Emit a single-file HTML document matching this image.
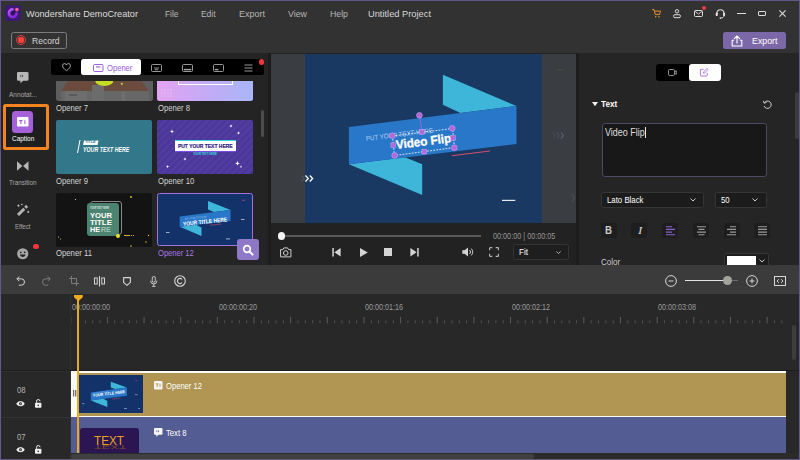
<!DOCTYPE html>
<html><head><meta charset="utf-8"><title>Wondershare DemoCreator</title>
<style>
*{box-sizing:border-box;margin:0;padding:0}
html,body{width:800px;height:460px;overflow:hidden;background:#323232;font-family:"Liberation Sans",sans-serif;color:#d0d0d0;font-size:9px}
.a{position:absolute}
#win{position:absolute;left:0;top:0;width:800px;height:460px;background:#323232;overflow:hidden}
.t{position:absolute;white-space:nowrap;line-height:1.15}
svg{overflow:visible}
</style></head><body>
<div id="win">
<svg class="a" style="left:5.2px;top:5.1px;" width="16" height="16" viewBox="0 0 16 16" fill="none"><rect x="0" y="0" width="16" height="16" rx="3.300" fill="#3b1b70"/>
<defs><linearGradient id="lg" x1="0" y1="0" x2="0.600" y2="1"><stop offset="0" stop-color="#c060ff"/><stop offset="0.500" stop-color="#a838f4"/><stop offset="1" stop-color="#8428d8"/></linearGradient><clipPath id="lc"><rect x="0" y="0" width="16" height="16" rx="3.300"/></clipPath></defs>
<circle cx="7.800" cy="8.200" r="3" fill="#2c1460"/><path d="M7.400 4.400A3.800 3.800 0 1 0 11.500 8.700" stroke="url(#lg)" stroke-width="2.700" stroke-linecap="round"/>
<circle cx="11.900" cy="4.600" r="1.800" fill="#ff60a4"/></svg>
<div class="t" style="left:26.00px;top:8.48px;font-size:9.6px;color:#dcdcdc;transform:scaleX(0.9512);transform-origin:0 50%;">Wondershare DemoCreator</div>
<div class="t" style="left:165.00px;top:8.48px;font-size:9.6px;color:#b6b6b6;transform:scaleX(0.8727);transform-origin:0 50%;">File</div>
<div class="t" style="left:201.00px;top:8.48px;font-size:9.6px;color:#b6b6b6;transform:scaleX(0.8765);transform-origin:0 50%;">Edit</div>
<div class="t" style="left:238.50px;top:8.48px;font-size:9.6px;color:#b6b6b6;transform:scaleX(0.9371);transform-origin:0 50%;">Export</div>
<div class="t" style="left:287.50px;top:8.48px;font-size:9.6px;color:#b6b6b6;transform:scaleX(0.9208);transform-origin:0 50%;">View</div>
<div class="t" style="left:329.50px;top:8.48px;font-size:9.6px;color:#b6b6b6;transform:scaleX(0.9117);transform-origin:0 50%;">Help</div>
<div class="t" style="left:368.00px;top:8.48px;font-size:9.6px;color:#d6d6d6;transform:scaleX(0.9678);transform-origin:0 50%;">Untitled Project</div>
<svg class="a" style="left:651.8px;top:8.8px;" width="9" height="9" viewBox="0 0 9 9" fill="none"><path d="M0.500 0.600h1.500l1.200 4.800h4.300l1-3.300H2.500" stroke="#e8902a" stroke-width="1" stroke-linejoin="round" stroke-linecap="round"/><circle cx="3.700" cy="7.700" r="0.800" fill="#e8902a"/><circle cx="7" cy="7.700" r="0.800" fill="#e8902a"/></svg>
<svg class="a" style="left:673.3px;top:8.8px;" width="8" height="10" viewBox="0 0 8 10" fill="none"><circle cx="4" cy="2.300" r="1.700" stroke="#dcdcdc" stroke-width="1"/><rect x="0.600" y="5.700" width="6.800" height="3" rx="1.300" stroke="#dcdcdc" stroke-width="1"/></svg>
<svg class="a" style="left:694.3px;top:10.3px;" width="9" height="7" viewBox="0 0 9 7" fill="none"><rect x="0.500" y="0.500" width="8" height="6" rx="1" stroke="#dcdcdc" stroke-width="1"/><path d="M0.900 1.200l3.600 2.800 3.600-2.800" stroke="#dcdcdc" stroke-width="0.900"/></svg>
<div class="a" style="left:701.9px;top:5.9px;width:4.2px;height:4.2px;background:#f0383c;border-radius:50%"></div>
<svg class="a" style="left:714.7px;top:8px;" width="12" height="13" viewBox="0 0 12 13" fill="none"><g transform="scale(0.9)"><path d="M2.2 8V5.8a3.8 3.8 0 0 1 7.6 0V8" stroke="#e0e0e0" stroke-width="1.2"/><rect x="0.8" y="5" width="2.2" height="4" rx="1" fill="#e0e0e0"/><rect x="9" y="5" width="2.2" height="4" rx="1" fill="#e0e0e0"/><path d="M9.8 9c0 1.4-1.2 2-3 2" stroke="#e0e0e0" stroke-width="1"/><circle cx="6" cy="11.2" r="1" fill="#e0e0e0"/></g></svg>
<div class="a" style="left:737.2px;top:12.8px;width:8.5px;height:1.3px;background:#dcdcdc;"></div>
<div class="a" style="left:757.5px;top:10.8px;width:8.5px;height:5.4px;border:1.200px solid #dcdcdc;border-radius:1px"></div>
<svg class="a" style="left:779px;top:10px;" width="7" height="7" viewBox="0 0 7 7" fill="none"><path d="M0.400 0.400l6.200 6.200M6.600 0.400l-6.200 6.200" stroke="#dcdcdc" stroke-width="1.100"/></svg>
<div class="a" style="left:10.5px;top:32px;width:56.5px;height:16.5px;border:1px solid #7c7c7c;border-radius:2.5px"></div>
<svg class="a" style="left:15.5px;top:35px;" width="10" height="10" viewBox="0 0 10 10" fill="none"><circle cx="5" cy="5" r="4.5" stroke="#f0413c" stroke-width="0.9"/><circle cx="5" cy="5" r="3.2" fill="#f0413c"/></svg>
<div class="t" style="left:31.50px;top:34.78px;font-size:9.6px;color:#d6d6d6;transform:scaleX(0.8886);transform-origin:0 50%;">Record</div>
<div class="a" style="left:723px;top:32px;width:63px;height:16.5px;background:#7b68a8;border-radius:2.5px"></div>
<svg class="a" style="left:730.5px;top:34.5px;" width="12" height="12" viewBox="0 0 12 12" fill="none"><path d="M6 8V1.2M3.4 3.6L6 1l2.6 2.6" stroke="#fff" stroke-width="1.1" stroke-linecap="round" stroke-linejoin="round"/><path d="M3 5.2H1.2V11h9.6V5.2H9" stroke="#fff" stroke-width="1.1" stroke-linejoin="round"/></svg>
<div class="t" style="left:751.60px;top:35.48px;font-size:9.6px;color:#ffffff;transform:scaleX(0.9191);transform-origin:0 50%;">Export</div>
<div class="a" style="left:0px;top:53px;width:800px;height:212px;background:#1c1c1c;"></div>
<div class="a" style="left:0px;top:53px;width:48px;height:212px;background:#242424;"></div>
<div class="a" style="left:48px;top:53px;width:220px;height:212px;background:#242424;"></div>
<div class="a" style="left:271px;top:53px;width:305px;height:212px;background:#222222;"></div>
<div class="a" style="left:579px;top:53px;width:221px;height:212px;background:#252525;"></div>
<svg class="a" style="left:17px;top:72px;" width="11.5" height="11.5" viewBox="0 0 11.5 11.5" fill="none"><path d="M1.2 0h9.1a1.2 1.2 0 0 1 1.2 1.2v6.3a1.2 1.2 0 0 1-1.2 1.2H6.2L3.4 11.3V8.7H1.2A1.2 1.2 0 0 1 0 7.500V1.2A1.200 1.200 0 0 1 1.200 0z" fill="#b8b8b8"/><path d="M3.8 3.200v2M5.600 3.200v2" stroke="#555" stroke-width="0.9"/><path d="M3.300 3.300h1M5.100 3.300h1" stroke="#555" stroke-width="0.800"/></svg>
<div class="t" style="left:8.80px;top:90.52px;font-size:7.8px;color:#a8a8a8;transform:scaleX(0.8386);transform-origin:0 50%;">Annotat...</div>
<div class="a" style="left:2.6px;top:103.7px;width:46.5px;height:46px;background:#1e1e1e;border:3.300px solid #f5831f;border-radius:2.500px"></div>
<div class="a" style="left:12.1px;top:111.2px;width:21.2px;height:21.5px;background:#a461d9;border-radius:3.500px"></div>
<svg class="a" style="left:17px;top:117px;" width="11.5" height="9.5" viewBox="0 0 11.5 9.5" fill="none"><rect x="0" y="0" width="11.500" height="9.500" rx="0.800" fill="#fff"/><path d="M2.200 3.600h3.400M3.900 3.600v3.400" stroke="#a45fd8" stroke-width="1.1"/><path d="M7.900 3.300v3.800" stroke="#a45fd8" stroke-width="1.100"/></svg>
<div class="t" style="left:11.60px;top:134.71px;font-size:7.8px;color:#ffffff;transform:scaleX(0.8295);transform-origin:0 50%;">Caption</div>
<svg class="a" style="left:17px;top:161px;" width="11.5" height="10" viewBox="0 0 11.5 10" fill="none"><path d="M0 0.300L5.400 5 0 9.700z" fill="#b6b6b6"/><path d="M11.500 0.300L6.100 5l5.400 4.700z" fill="#b6b6b6"/></svg>
<div class="t" style="left:9.00px;top:179.12px;font-size:7.8px;color:#a8a8a8;transform:scaleX(0.8099);transform-origin:0 50%;">Transition</div>
<svg class="a" style="left:16px;top:203px;" width="14" height="14" viewBox="0 0 14 14" fill="none"><path d="M2 12L8.300 5.700" stroke="#b2b2b2" stroke-width="3" stroke-linecap="butt"/><path d="M9.300 4.700l1.800-1.800" stroke="#b2b2b2" stroke-width="3" stroke-linecap="butt"/><path d="M2.500 1.500v2.400M1.300 2.700h2.400M12.200 7.800v2.200M11.100 8.900h2.200M5.800 0.800v1.400M5.100 1.500h1.400" stroke="#b2b2b2" stroke-width="1"/></svg>
<div class="t" style="left:15.00px;top:222.81px;font-size:7.8px;color:#a8a8a8;transform:scaleX(0.7828);transform-origin:0 50%;">Effect</div>
<svg class="a" style="left:17px;top:247.5px;" width="11.5" height="11.5" viewBox="0 0 11.5 11.5" fill="none"><circle cx="5.750" cy="5.750" r="5.600" fill="#a8a8a8"/><circle cx="3.800" cy="4.300" r="0.900" fill="#242424"/><circle cx="7.700" cy="4.300" r="0.900" fill="#242424"/><path d="M2.800 6.600a3 3 0 0 0 5.900 0z" fill="#242424"/></svg>
<div class="a" style="left:33.2px;top:243.8px;width:5.6px;height:5.6px;background:#f0383c;border-radius:50%"></div>
<div class="a" style="left:56px;top:80.500px;width:96.500px;height:20.700px;overflow:hidden;background:#5e5e5e;border-radius:0 0 2.500px 2.500px"><svg class="a" style="left:0;top:0" width="96.500" height="20.700"><path d="M12 0h73.500l7 10H5z" fill="#6b4b3d"/><rect x="5" y="10" width="88" height="10.700" fill="#676767"/><rect x="9" y="10" width="22" height="10.700" fill="#6e6e6e"/><rect x="36" y="4" width="12" height="16.700" fill="#6c6c6c"/><rect x="13" y="13" width="8" height="2" fill="#5a5a5a"/><rect x="66" y="11" width="3" height="9.700" fill="#6f6f6f"/><ellipse cx="48.300" cy="0" rx="9" ry="5" fill="#c6de22"/><circle cx="65.800" cy="2.800" r="1.100" fill="#c6de22"/></svg></div>
<div class="a" style="left:157.200px;top:80.500px;width:96px;height:20.700px;overflow:hidden;background:linear-gradient(90deg,#e3a4f2,#c4aaf6 50%,#a8b6f8);border-radius:0 0 2.500px 2.500px"><div class="a" style="left:21px;top:-10px;width:55px;height:14px;border:1px solid #fff"></div><svg class="a" style="left:4px;top:8px" width="16" height="12"><g fill="#fff" opacity="0.7"><circle cx="1" cy="1" r="0.500"/><circle cx="4" cy="1" r="0.500"/><circle cx="7" cy="1" r="0.500"/><circle cx="10" cy="1" r="0.500"/><circle cx="1" cy="4" r="0.500"/><circle cx="4" cy="4" r="0.500"/><circle cx="7" cy="4" r="0.500"/><circle cx="10" cy="4" r="0.500"/><circle cx="1" cy="7" r="0.500"/><circle cx="4" cy="7" r="0.500"/><circle cx="7" cy="7" r="0.500"/><circle cx="10" cy="7" r="0.500"/></g></svg></div>
<div class="t" style="left:56.00px;top:103.34px;font-size:8.8px;color:#d4d4d4;transform:scaleX(0.8722);transform-origin:0 50%;">Opener 7</div>
<div class="t" style="left:157.50px;top:103.34px;font-size:8.8px;color:#d4d4d4;transform:scaleX(0.8722);transform-origin:0 50%;">Opener 8</div>
<div class="a" style="left:56px;top:120px;width:96px;height:54px;overflow:hidden;background:#33788a;border-radius:2px"><svg class="a" style="left:0;top:0" width="96" height="54"><path d="M21.500 33L24 20" stroke="#fff" stroke-width="1"/><path d="M28 20.500h14.500l-1 4.500H27z" fill="#fff"/></svg></div>
<div class="t" style="left:84.80px;top:140.30px;font-size:4px;color:#2f7687;font-weight:bold;font-style:italic;transform:scaleX(0.9450);transform-origin:0 50%;">TITLE</div>
<div class="t" style="left:82.70px;top:145.86px;font-size:7.2px;color:#ffffff;font-weight:bold;font-style:italic;transform:scaleX(0.7340);transform-origin:0 50%;">YOUR TEXT HERE</div>
<div class="a" style="left:157.200px;top:120px;width:96px;height:54px;overflow:hidden;border-radius:2px;background:repeating-linear-gradient(135deg,#513da2 0,#513da2 2.500px,#4a3798 2.500px,#4a3798 5px)"><div class="a" style="left:17.500px;top:20.300px;width:61.500px;height:11.500px;background:#fff;border-top:1px solid #38d8e0;border-bottom:1px solid #7a4ae0"></div><svg class="a" style="left:0;top:0" width="96" height="54"><g fill="#fff"><path d="M15 9.500l.6 1.400 1.400.6-1.400.6-.6 1.400-.6-1.400-1.400-.6 1.400-.6z"/><path d="M74 4.500l.5 1.100 1.100.5-1.100.5-.5 1.100-.5-1.100-1.100-.5 1.100-.5z"/><path d="M81.500 11.500l.5 1.100 1.100.5-1.100.5-.5 1.100-.5-1.100-1.100-.5 1.100-.5z"/><path d="M28 37.500l.5 1.100 1.100.5-1.100.5-.5 1.100-.5-1.100-1.100-.5 1.100-.5z"/><path d="M10.500 45l.5 1.100 1.100.5-1.100.5-.5 1.100-.5-1.100-1.100-.5 1.100-.5z"/><path d="M80.500 41l.7 1.700 1.700.7-1.700.7-.7 1.700-.7-1.700-1.700-.7 1.700-.7z"/><path d="M84 45.500l.4.900.9.400-.9.400-.4.900-.4-.9-.9-.4.900-.4z"/></g></svg></div>
<div class="t" style="left:178.20px;top:143.08px;font-size:5.6px;color:#2e2282;font-weight:bold;transform:scaleX(0.8832);transform-origin:0 50%;-webkit-text-stroke:0.2px #2e2282;">PUT YOUR TEXT HERE</div>
<div class="t" style="left:193.00px;top:153.16px;font-size:3.2px;color:#38d8e0;font-weight:bold;transform:scaleX(0.8543);transform-origin:0 50%;">YOUR TEXT HERE</div>
<div class="t" style="left:56.00px;top:175.64px;font-size:8.8px;color:#d4d4d4;transform:scaleX(0.8722);transform-origin:0 50%;">Opener 9</div>
<div class="t" style="left:157.50px;top:175.64px;font-size:8.8px;color:#d4d4d4;transform:scaleX(0.8729);transform-origin:0 50%;">Opener 10</div>
<div class="a" style="left:56px;top:192.500px;width:96px;height:54px;overflow:hidden;background:#131313;border-radius:2px"><div class="a" style="left:33.500px;top:8px;width:32px;height:34px;border:0.8px solid #8a8a8a;border-radius:3px"></div><div class="a" style="left:30.500px;top:10.500px;width:32.500px;height:33px;background:#4b8270;border-radius:3px"></div><div class="a" style="left:59.500px;top:41.500px;width:4px;height:4px;border-radius:50%;background:#e8e020"></div><div class="a" style="left:68px;top:42.500px;width:11px;height:1.200px;background:repeating-linear-gradient(90deg,#d8b020 0,#d8b020 1.500px,transparent 1.500px,transparent 2.200px)"></div><svg class="a" style="left:0;top:0" width="96" height="54"><g fill="#e8d020"><circle cx="75" cy="4" r="0.900"/><circle cx="92.500" cy="42.500" r="0.700"/><circle cx="90" cy="49" r="0.700"/><circle cx="75" cy="53" r="0.800"/><circle cx="4.500" cy="46" r="0.600"/></g><g fill="#e0e0e0"><circle cx="19.500" cy="6.500" r="0.600"/><circle cx="2.500" cy="44" r="0.600"/></g></svg></div>
<div class="t" style="left:90.30px;top:207.08px;font-size:3px;color:#d8e8e0;font-weight:bold;font-style:italic;transform:scaleX(0.7213);transform-origin:0 50%;">YOUR TEXT HERE</div>
<div class="t" style="left:90.30px;top:212.05px;font-size:7.4px;color:#ffffff;font-weight:bold;transform:scaleX(1.0290);transform-origin:0 50%;">YOUR</div>
<div class="t" style="left:90.30px;top:218.94px;font-size:7.4px;color:#ffffff;font-weight:bold;transform:scaleX(1.0704);transform-origin:0 50%;">TITLE</div>
<div class="t" style="left:90.30px;top:225.84px;font-size:7.4px;color:#ffffff;font-weight:bold;transform:scaleX(0.9922);transform-origin:0 50%;">HE</div>
<div class="t" style="left:100.70px;top:225.84px;font-size:7.4px;color:#9cc4b4;font-weight:bold;">RE</div>
<div class="a" style="left:157.300px;top:192.800px;width:96.200px;height:53.400px;overflow:hidden;background:#14326a;border:1.500px solid #a06fe2;border-radius:2.500px"><svg class="a" style="left:-1.500px;top:-1.500px" width="96.200" height="53.400" viewBox="0 0 96.200 53.400"><path d="M51 9.100L73.600 17.900 57 20 51 17.500z" fill="#3db6da"/><path d="M44.500 44L22.700 34.800 39 32.800 44.500 35.500z" fill="#3db6da"/><path d="M22.700 24.400L73.600 17.900V28.700L22.700 34.800z" fill="#2877c8"/><path d="M53 33.300l11.500-1.300" stroke="#d04a68" stroke-width="0.600"/><g fill="#c8d0e0"><rect x="9" y="40" width="3.500" height="0.800"/><rect x="84" y="27.200" width="3.500" height="0.800"/><rect x="69" y="46.500" width="4" height="0.800"/></g><rect x="85" y="7.800" width="3" height="0.700" fill="#d04a68"/></svg></div>
<div class="t" style="left:184.50px;top:218.39px;font-size:2.8px;color:#a8c4e8;transform:rotate(-6deg) scaleX(0.7153);transform-origin:0 50%;">PUT YOUR TEXT HERE</div>
<div class="t" style="left:183.00px;top:220.91px;font-size:5.9px;color:#ffffff;font-weight:bold;transform:rotate(-6deg) scaleX(0.8379);transform-origin:0 50%;">YOUR TITLE HERE</div>
<div class="t" style="left:56.00px;top:248.34px;font-size:8.8px;color:#d4d4d4;transform:scaleX(0.8795);transform-origin:0 50%;">Opener 11</div>
<div class="t" style="left:157.50px;top:248.34px;font-size:8.8px;color:#a878e6;transform:scaleX(0.8609);transform-origin:0 50%;">Opener 12</div>
<div class="a" style="left:50.5px;top:59px;width:213.5px;height:16px;background:#000000;border-radius:2.5px"></div>
<div class="a" style="left:81px;top:59px;width:60px;height:16px;background:#ffffff;border-radius:2.5px"></div>
<svg class="a" style="left:61.5px;top:63.3px;" width="9" height="8.5" viewBox="0 0 9 8.5" fill="none"><path d="M4.500 7.700C1.900 5.800 0.600 4.400 0.600 2.800A2 2 0 0 1 4.500 2 2 2 0 0 1 8.400 2.800C8.400 4.400 7.100 5.800 4.500 7.700z" stroke="#b4b4b4" stroke-width="0.900"/></svg>
<svg class="a" style="left:92.5px;top:63.5px;" width="10.5" height="8" viewBox="0 0 10.5 8" fill="none"><rect x="0.500" y="0.500" width="9.500" height="7" rx="1" stroke="#9a62dc" stroke-width="1"/><path d="M3 2.900h4.500" stroke="#9a62dc" stroke-width="1.100"/></svg>
<div class="t" style="left:106.60px;top:62.54px;font-size:8.8px;color:#9560d6;transform:scaleX(0.8654);transform-origin:0 50%;">Opener</div>
<svg class="a" style="left:151px;top:63.5px;" width="11" height="8" viewBox="0 0 11 8" fill="none"><rect x="0.500" y="0.500" width="10" height="7" rx="1" stroke="#a8a8a8" stroke-width="0.900"/><path d="M3 4h5" stroke="#a8a8a8" stroke-width="0.900"/><path d="M3.800 5.700h3.400" stroke="#a8a8a8" stroke-width="0.900"/></svg>
<svg class="a" style="left:181.5px;top:63.5px;" width="11" height="8" viewBox="0 0 11 8" fill="none"><rect x="0.500" y="0.500" width="10" height="7" rx="1" stroke="#a8a8a8" stroke-width="0.900"/><path d="M1.800 5.600h7.400" stroke="#a8a8a8" stroke-width="1.400"/></svg>
<svg class="a" style="left:212.5px;top:63.5px;" width="11" height="8" viewBox="0 0 11 8" fill="none"><rect x="0.500" y="0.500" width="10" height="7" rx="1" stroke="#a8a8a8" stroke-width="0.900"/><path d="M1.800 5.600h3.600" stroke="#a8a8a8" stroke-width="1.400"/></svg>
<svg class="a" style="left:244px;top:63.5px;" width="9" height="8" viewBox="0 0 9 8" fill="none"><path d="M0.500 1h8M0.500 4h8M0.500 7h8" stroke="#a8a8a8" stroke-width="0.900"/></svg>
<div class="a" style="left:258.6px;top:59.3px;width:5.4px;height:5.4px;background:#f0383c;border-radius:50%"></div>
<div class="a" style="left:260.5px;top:110px;width:3.5px;height:26.5px;background:#4c4c4c;border-radius:2px"></div>
<div class="a" style="left:237.3px;top:239px;width:21.7px;height:21px;background:#8f78c8;border-radius:3px"></div>
<svg class="a" style="left:242.3px;top:243.7px;" width="12" height="12" viewBox="0 0 12 12" fill="none"><circle cx="5" cy="5" r="3.300" stroke="#fff" stroke-width="1.700"/><path d="M7.600 7.600l3 3" stroke="#fff" stroke-width="2" stroke-linecap="round"/></svg>
<div class="a" style="left:271px;top:53.5px;width:305px;height:169px;background:#3a3d42;"></div>
<div class="a" style="left:304.6px;top:53.5px;width:237px;height:169px;background:#193963;"></div>
<svg class="a" style="left:271px;top:53px;" width="305" height="170" viewBox="0 0 305 170" fill="none">
<path d="M171.900 21.700L245.500 53 189.500 60 171.900 51.800z" fill="#3db6da"/>
<path d="M151.200 141.900L77.900 111.300 133.900 104.300 151.200 111.300z" fill="#3db6da"/>
<path d="M77.900 74.100L245.500 53V91L77.900 111.300z" fill="#2877c8"/>
<path d="M180.900 102.700l38-4.700" stroke="#d0506c" stroke-width="1"/>
<rect x="231" y="146.800" width="13.300" height="1.200" fill="#e8e8e8"/>
<path d="M30.600 122.500l2.600 3-2.600 3" stroke="#565a60" stroke-width="1"/><path d="M34.500 122.500l2.800 3-2.800 3M38.800 122.500l2.800 3-2.800 3" stroke="#fff" stroke-width="1.300"/>
<path d="M282 79.500l2.200 3-2.200 3" stroke="#484b51" stroke-width="1"/><path d="M286 79.500l2.200 3-2.200 3" stroke="#52565c" stroke-width="1"/><path d="M290 79.500l2.400 3-2.400 3" stroke="#5e6268" stroke-width="1.200"/>
<path d="M301 141l2.500 4-2.500 4" stroke="#4c4f54" stroke-width="1.200"/>
<rect x="286" y="16.200" width="7" height="1" fill="#54483f"/>
</svg>
<div class="t" style="left:366.00px;top:135.28px;font-size:7px;color:#b6cef0;transform:rotate(-7deg) scaleX(0.8779);transform-origin:0 50%;">PUT YOUR TEXT HERE</div>
<div class="t" style="left:395.50px;top:138.23px;font-size:12.3px;color:#ffffff;font-weight:bold;transform:rotate(-7deg) scaleX(0.9479);transform-origin:0 50%;-webkit-text-stroke:0.35px #fff;">Video Flip</div>
<svg class="a" style="left:385px;top:108px;" width="80" height="56" viewBox="0 0 80 56" fill="none">
<path d="M7.500 28L67.500 20.500 69.500 39.500 9.500 47.500z" stroke="#fff" stroke-width="0.800" stroke-dasharray="1.800 1.300"/>
<path d="M34.500 7.500l2.500 16" stroke="#b060d8" stroke-width="0.900"/>
<g fill="#b267dc" stroke="#d8a8f0" stroke-width="0.500">
<circle cx="34.400" cy="7.300" r="2.900"/><circle cx="7.300" cy="27.700" r="2.900"/><circle cx="67.200" cy="20.300" r="2.900"/><circle cx="9.600" cy="47.400" r="2.900"/><circle cx="69.300" cy="39.700" r="2.900"/>
<rect x="34.700" y="21.600" width="4.600" height="4.600"/><rect x="37" y="41.400" width="4.600" height="4.600"/><rect x="5.900" y="34.800" width="4.600" height="4.600"/><rect x="65.700" y="27.600" width="4.600" height="4.600"/>
</g></svg>
<div class="a" style="left:277.5px;top:235px;width:203.5px;height:1.6px;background:#5a5a5a;"></div>
<div class="a" style="left:278px;top:232.2px;width:7.4px;height:7.4px;background:#f4f4f4;border-radius:50%"></div>
<div class="t" style="left:493.00px;top:231.66px;font-size:8.6px;color:#969696;transform:scaleX(0.8437);transform-origin:0 50%;">00:00:00 | 00:00:05</div>
<svg class="a" style="left:280px;top:247px;" width="11.5" height="10.5" viewBox="0 0 11.5 10.5" fill="none"><path d="M0.600 2.600h2.300l1-1.700h3.700l1 1.700h2.300v7.300H0.600z" stroke="#cfcfcf" stroke-width="1"/><circle cx="5.750" cy="6" r="2.300" stroke="#cfcfcf" stroke-width="1"/></svg>
<svg class="a" style="left:332px;top:248px;" width="9" height="8.5" viewBox="0 0 9 8.5" fill="none"><rect x="0.300" y="0" width="1.500" height="8.500" fill="#d4d4d4"/><path d="M8.600 0v8.500L2.400 4.250z" fill="#d4d4d4"/></svg>
<svg class="a" style="left:359.5px;top:247.7px;" width="8" height="9" viewBox="0 0 8 9" fill="none"><path d="M0 0l7.800 4.500L0 9z" fill="#d4d4d4"/></svg>
<div class="a" style="left:384px;top:248px;width:8.3px;height:8.3px;background:#d4d4d4;"></div>
<svg class="a" style="left:410px;top:248px;" width="9" height="8.5" viewBox="0 0 9 8.5" fill="none"><rect x="7.200" y="0" width="1.500" height="8.500" fill="#d4d4d4"/><path d="M0.400 0v8.500L6.600 4.250z" fill="#d4d4d4"/></svg>
<svg class="a" style="left:461.5px;top:247px;" width="11.5" height="10" viewBox="0 0 11.5 10" fill="none"><path d="M0.300 3.300h2.300L6 0.500v9L2.600 6.700H0.300z" fill="#d4d4d4"/><path d="M7.600 3a2.800 2.800 0 0 1 0 4" stroke="#d4d4d4" stroke-width="1"/><path d="M9.200 1.500a4.800 4.800 0 0 1 0 7" stroke="#d4d4d4" stroke-width="0.900"/></svg>
<svg class="a" style="left:489px;top:247px;" width="10" height="10" viewBox="0 0 10 10" fill="none"><path d="M0.600 3.300V1.300a.7.700 0 0 1 .7-.7h2M6.700.6h2a.7.700 0 0 1 .7.700v2M9.400 6.700v2a.7.700 0 0 1-.7.700h-2M3.300 9.400h-2a.7.700 0 0 1-.7-.7v-2" stroke="#b8b8b8" stroke-width="1.100"/></svg>
<div class="a" style="left:513px;top:244.4px;width:56px;height:15.3px;background:#1e1e1e;border:1px solid #353535;border-radius:2.500px"></div>
<div class="t" style="left:518.50px;top:247.02px;font-size:9px;color:#ffffff;transform:scaleX(0.9003);transform-origin:0 50%;">Fit</div>
<svg class="a" style="left:555.5px;top:250.7px;" width="5" height="3.5" viewBox="0 0 5 3.5" fill="none"><path d="M0.400 0.400L2.500 2.600 4.600 0.400" stroke="#b8b8b8" stroke-width="0.900"/></svg>
<div class="a" style="left:656.2px;top:64px;width:65px;height:17px;background:#000000;border-radius:3px"></div>
<div class="a" style="left:688.7px;top:64px;width:32.5px;height:17px;background:#ffffff;border-radius:3px"></div>
<svg class="a" style="left:668px;top:69px;" width="10" height="8" viewBox="0 0 10 8" fill="none"><rect x="0.500" y="0.500" width="6" height="6" rx="1.200" stroke="#b4b4b4" stroke-width="0.800"/><path d="M6.700 2.700l1.600-1v3.600l-1.600-1" stroke="#b4b4b4" stroke-width="0.800"/></svg>
<svg class="a" style="left:700.4px;top:68.3px;" width="10" height="10" viewBox="0 0 10 10" fill="none"><g transform="scale(0.85)"><path d="M4.300 1.500H1.300a.8.800 0 0 0-.8.800v6.400a.8.800 0 0 0 .8.800h6.400a.8.800 0 0 0 .8-.8V5.700" stroke="#a05fe0" stroke-width="1"/><path d="M4 6l.4-1.700L8.300.5l1.300 1.300-3.900 3.800z" stroke="#a05fe0" stroke-width="0.900" stroke-linejoin="round"/></g></svg>
<svg class="a" style="left:591.5px;top:102px;" width="6" height="4.5" viewBox="0 0 6 4.5" fill="none"><path d="M0 0h6L3 4.200z" fill="#f0f0f0"/></svg>
<div class="t" style="left:601.00px;top:99.03px;font-size:9px;color:#ffffff;font-weight:bold;transform:scaleX(0.9083);transform-origin:0 50%;">Text</div>
<svg class="a" style="left:763px;top:99.5px;" width="9" height="9" viewBox="0 0 9 9" fill="none"><path d="M1.300 2.800A3.700 3.700 0 1 1 1 6" stroke="#d0d0d0" stroke-width="1"/><path d="M0.300 0.800l.8 2.400 2.400-.7" stroke="#d0d0d0" stroke-width="0.900" stroke-linejoin="round"/></svg>
<div class="a" style="left:601.8px;top:122.5px;width:165.7px;height:54.8px;background:#181818;border:1px solid #4d4766;border-radius:3px"></div>
<div class="t" style="left:605.00px;top:126.21px;font-size:10.6px;color:#dedede;transform:scaleX(0.8478);transform-origin:0 50%;">Video Flip</div>
<div class="a" style="left:645px;top:126.5px;width:0.8px;height:11.5px;background:#e8e8e8;"></div>
<div class="a" style="left:600.5px;top:192.3px;width:103px;height:15.4px;background:#1c1c1c;border:1px solid #363636;border-radius:2.500px"></div>
<div class="t" style="left:606.50px;top:195.42px;font-size:9px;color:#ffffff;transform:scaleX(0.8686);transform-origin:0 50%;">Lato Black</div>
<svg class="a" style="left:689.8px;top:198.3px;" width="6" height="4" viewBox="0 0 6 4" fill="none"><path d="M0.500 0.500L3 3 5.500 0.500" stroke="#c8c8c8" stroke-width="1"/></svg>
<div class="a" style="left:714.6px;top:192.3px;width:52px;height:15.4px;background:#1c1c1c;border:1px solid #363636;border-radius:2.500px"></div>
<div class="t" style="left:720.70px;top:195.42px;font-size:9px;color:#ffffff;transform:scaleX(0.8592);transform-origin:0 50%;">50</div>
<svg class="a" style="left:752.3px;top:198.3px;" width="6" height="4" viewBox="0 0 6 4" fill="none"><path d="M0.500 0.500L3 3 5.500 0.500" stroke="#c8c8c8" stroke-width="1"/></svg>
<div class="a" style="left:600.7px;top:222.7px;width:16px;height:15.8px;background:#1e1e1e;border-radius:2px"></div>
<div class="a" style="left:631.4px;top:222.7px;width:16px;height:15.8px;background:#1e1e1e;border-radius:2px"></div>
<div class="a" style="left:662.1px;top:222.7px;width:16px;height:15.8px;background:#1e1e1e;border-radius:2px"></div>
<div class="a" style="left:692.8px;top:222.7px;width:16px;height:15.8px;background:#1e1e1e;border-radius:2px"></div>
<div class="a" style="left:723.5px;top:222.7px;width:16px;height:15.8px;background:#1e1e1e;border-radius:2px"></div>
<div class="a" style="left:754.2px;top:222.7px;width:16px;height:15.8px;background:#1e1e1e;border-radius:2px"></div>
<div class="t" style="left:605.20px;top:224.38px;font-size:11px;color:#cccccc;font-weight:bold;transform:scaleX(0.8812);transform-origin:0 50%;">B</div>
<div class="t" style="left:637.50px;top:224.38px;font-size:11px;color:#d8d8d8;font-style:italic;transform:scaleX(1.1779);transform-origin:0 50%;font-family:'Liberation Serif',serif;">I</div>
<svg class="a" style="left:665.9px;top:226px;" width="9" height="9.5" viewBox="0 0 9 9.5" fill="none"><path d="M0 0.700h6M0 3.400h9M0 6.100h6M0 8.800h9" stroke="#8a5fd0" stroke-width="1.100"/></svg>
<svg class="a" style="left:696.6px;top:226px;" width="9" height="9.5" viewBox="0 0 9 9.5" fill="none"><path d="M0 0.700h9M1.500 3.400h6M0 6.100h9M1.500 8.800h6" stroke="#9a9a9a" stroke-width="1.100"/></svg>
<svg class="a" style="left:727.3px;top:226px;" width="9" height="9.5" viewBox="0 0 9 9.5" fill="none"><path d="M3 0.700h6M0 3.400h9M3 6.100h6M0 8.800h9" stroke="#9a9a9a" stroke-width="1.100"/></svg>
<svg class="a" style="left:758px;top:226px;" width="9" height="9.5" viewBox="0 0 9 9.5" fill="none"><path d="M0 0.700h9M0 3.400h9M0 6.100h9M0 8.800h9" stroke="#9a9a9a" stroke-width="1.100"/></svg>
<div class="t" style="left:600.50px;top:256.72px;font-size:9px;color:#d0d0d0;transform:scaleX(0.8928);transform-origin:0 50%;">Color</div>
<div class="a" style="left:723.8px;top:253.4px;width:45px;height:14px;background:#1c1c1c;border:1px solid #363636;border-radius:2px"></div>
<div class="a" style="left:726.5px;top:256px;width:29px;height:10px;background:#ffffff;"></div>
<svg class="a" style="left:759px;top:259.3px;" width="6" height="4" viewBox="0 0 6 4" fill="none"><path d="M0.500 0.500L3 3 5.500 0.500" stroke="#c8c8c8" stroke-width="1"/></svg>
<div class="a" style="left:795px;top:91.5px;width:3.5px;height:47.5px;background:#3c3c3c;border-radius:2px"></div>
<div class="a" style="left:0px;top:265px;width:800px;height:28.8px;background:#3b3b3b;"></div>
<div class="a" style="left:0px;top:293.8px;width:800px;height:166.2px;background:#282828;"></div>
<svg class="a" style="left:15.7px;top:276px;" width="9" height="10" viewBox="0 0 9 10" fill="none"><path d="M1 2.800h4.300a3.200 3.200 0 0 1 0 6.400H2.800" stroke="#d6d6d6" stroke-width="1"/><path d="M3.200 0.500L0.900 2.800l2.300 2.300" stroke="#d6d6d6" stroke-width="1"/></svg>
<svg class="a" style="left:42px;top:276px;" width="9" height="10" viewBox="0 0 9 10" fill="none"><path d="M8 2.800H3.700a3.200 3.200 0 0 0 0 6.400h2.500" stroke="#7c7c7c" stroke-width="1"/><path d="M5.800 0.500L8.100 2.800 5.800 5.100" stroke="#7c7c7c" stroke-width="1"/></svg>
<svg class="a" style="left:68.7px;top:276px;" width="10" height="10" viewBox="0 0 10 10" fill="none"><path d="M2.500 0v7.500H10M0 2.500h7.500V10" stroke="#7c7c7c" stroke-width="1"/></svg>
<svg class="a" style="left:94px;top:275.5px;" width="11" height="10.5" viewBox="0 0 11 10.5" fill="none"><rect x="0.500" y="2" width="2.700" height="6" stroke="#d6d6d6" stroke-width="1"/><rect x="7.800" y="2" width="2.700" height="6" stroke="#d6d6d6" stroke-width="1"/><path d="M5.500 0v10.500" stroke="#d6d6d6" stroke-width="1.100"/></svg>
<svg class="a" style="left:122.5px;top:276.5px;" width="8" height="9" viewBox="0 0 8 9" fill="none"><path d="M0.600 0.600h6.800v4.800L4 8.300 0.600 5.400z" stroke="#d6d6d6" stroke-width="1.100" stroke-linejoin="round"/></svg>
<svg class="a" style="left:149.5px;top:275.5px;" width="7.5" height="11" viewBox="0 0 7.5 11" fill="none"><rect x="2.250" y="0.500" width="3" height="5.800" rx="1.500" stroke="#d6d6d6" stroke-width="0.900"/><path d="M0.600 4.800a3.150 3.150 0 0 0 6.300 0M3.750 8v2M2 10.300h3.500" stroke="#d6d6d6" stroke-width="0.900"/></svg>
<svg class="a" style="left:174px;top:274.8px;" width="12" height="12" viewBox="0 0 12 12" fill="none"><circle cx="6" cy="6" r="5.300" stroke="#d6d6d6" stroke-width="1.100"/><path d="M8 4.300a2.600 2.600 0 1 0 0 3.400" stroke="#d6d6d6" stroke-width="1.100"/></svg>
<svg class="a" style="left:665px;top:274.6px;" width="12" height="12" viewBox="0 0 12 12" fill="none"><circle cx="6" cy="6" r="5.400" stroke="#d6d6d6" stroke-width="1"/><path d="M3.500 6h5" stroke="#d6d6d6" stroke-width="1"/></svg>
<div class="a" style="left:684.5px;top:280px;width:53.5px;height:1.2px;background:#6a6a6a;"></div>
<div class="a" style="left:684.5px;top:279.8px;width:43px;height:1.5px;background:#e4e4e4;"></div>
<div class="a" style="left:723px;top:276.2px;width:9px;height:9px;background:#a4a49c;border-radius:50%"></div>
<svg class="a" style="left:746px;top:274.6px;" width="12" height="12" viewBox="0 0 12 12" fill="none"><circle cx="6" cy="6" r="5.400" stroke="#d6d6d6" stroke-width="1"/><path d="M3.500 6h5M6 3.500v5" stroke="#d6d6d6" stroke-width="1"/></svg>
<svg class="a" style="left:774px;top:276px;" width="12" height="10" viewBox="0 0 12 10" fill="none"><rect x="0.500" y="0.500" width="11" height="9" stroke="#d6d6d6" stroke-width="1"/><path d="M4.800 3.300L3 5l1.800 1.700M7.200 3.300L9 5 7.200 6.700" stroke="#d6d6d6" stroke-width="1"/></svg>
<svg class="a" style="left:0px;top:0px;" width="800" height="460" viewBox="0 0 800 460" fill="none"><rect x="70.25" y="317" width="1" height="6.300" fill="#5c5c5c"/><rect x="77.58" y="320.300" width="1" height="3" fill="#505050"/><rect x="84.91" y="320.300" width="1" height="3" fill="#505050"/><rect x="92.24" y="320.300" width="1" height="3" fill="#505050"/><rect x="99.57" y="320.300" width="1" height="3" fill="#505050"/><rect x="106.90" y="317" width="1" height="6.300" fill="#5c5c5c"/><rect x="114.23" y="320.300" width="1" height="3" fill="#505050"/><rect x="121.56" y="320.300" width="1" height="3" fill="#505050"/><rect x="128.89" y="320.300" width="1" height="3" fill="#505050"/><rect x="136.22" y="320.300" width="1" height="3" fill="#505050"/><rect x="143.55" y="317" width="1" height="6.300" fill="#5c5c5c"/><rect x="150.88" y="320.300" width="1" height="3" fill="#505050"/><rect x="158.21" y="320.300" width="1" height="3" fill="#505050"/><rect x="165.54" y="320.300" width="1" height="3" fill="#505050"/><rect x="172.87" y="320.300" width="1" height="3" fill="#505050"/><rect x="180.20" y="317" width="1" height="6.300" fill="#5c5c5c"/><rect x="187.53" y="320.300" width="1" height="3" fill="#505050"/><rect x="194.86" y="320.300" width="1" height="3" fill="#505050"/><rect x="202.19" y="320.300" width="1" height="3" fill="#505050"/><rect x="209.52" y="320.300" width="1" height="3" fill="#505050"/><rect x="216.85" y="317" width="1" height="6.300" fill="#5c5c5c"/><rect x="224.18" y="320.300" width="1" height="3" fill="#505050"/><rect x="231.51" y="320.300" width="1" height="3" fill="#505050"/><rect x="238.84" y="320.300" width="1" height="3" fill="#505050"/><rect x="246.17" y="320.300" width="1" height="3" fill="#505050"/><rect x="253.50" y="317" width="1" height="6.300" fill="#5c5c5c"/><rect x="260.83" y="320.300" width="1" height="3" fill="#505050"/><rect x="268.16" y="320.300" width="1" height="3" fill="#505050"/><rect x="275.49" y="320.300" width="1" height="3" fill="#505050"/><rect x="282.82" y="320.300" width="1" height="3" fill="#505050"/><rect x="290.15" y="317" width="1" height="6.300" fill="#5c5c5c"/><rect x="297.48" y="320.300" width="1" height="3" fill="#505050"/><rect x="304.81" y="320.300" width="1" height="3" fill="#505050"/><rect x="312.14" y="320.300" width="1" height="3" fill="#505050"/><rect x="319.47" y="320.300" width="1" height="3" fill="#505050"/><rect x="326.80" y="317" width="1" height="6.300" fill="#5c5c5c"/><rect x="334.13" y="320.300" width="1" height="3" fill="#505050"/><rect x="341.46" y="320.300" width="1" height="3" fill="#505050"/><rect x="348.79" y="320.300" width="1" height="3" fill="#505050"/><rect x="356.12" y="320.300" width="1" height="3" fill="#505050"/><rect x="363.45" y="317" width="1" height="6.300" fill="#5c5c5c"/><rect x="370.78" y="320.300" width="1" height="3" fill="#505050"/><rect x="378.11" y="320.300" width="1" height="3" fill="#505050"/><rect x="385.44" y="320.300" width="1" height="3" fill="#505050"/><rect x="392.77" y="320.300" width="1" height="3" fill="#505050"/><rect x="400.10" y="317" width="1" height="6.300" fill="#5c5c5c"/><rect x="407.43" y="320.300" width="1" height="3" fill="#505050"/><rect x="414.76" y="320.300" width="1" height="3" fill="#505050"/><rect x="422.09" y="320.300" width="1" height="3" fill="#505050"/><rect x="429.42" y="320.300" width="1" height="3" fill="#505050"/><rect x="436.75" y="317" width="1" height="6.300" fill="#5c5c5c"/><rect x="444.08" y="320.300" width="1" height="3" fill="#505050"/><rect x="451.41" y="320.300" width="1" height="3" fill="#505050"/><rect x="458.74" y="320.300" width="1" height="3" fill="#505050"/><rect x="466.07" y="320.300" width="1" height="3" fill="#505050"/><rect x="473.40" y="317" width="1" height="6.300" fill="#5c5c5c"/><rect x="480.73" y="320.300" width="1" height="3" fill="#505050"/><rect x="488.06" y="320.300" width="1" height="3" fill="#505050"/><rect x="495.39" y="320.300" width="1" height="3" fill="#505050"/><rect x="502.72" y="320.300" width="1" height="3" fill="#505050"/><rect x="510.05" y="317" width="1" height="6.300" fill="#5c5c5c"/><rect x="517.38" y="320.300" width="1" height="3" fill="#505050"/><rect x="524.71" y="320.300" width="1" height="3" fill="#505050"/><rect x="532.04" y="320.300" width="1" height="3" fill="#505050"/><rect x="539.37" y="320.300" width="1" height="3" fill="#505050"/><rect x="546.70" y="317" width="1" height="6.300" fill="#5c5c5c"/><rect x="554.03" y="320.300" width="1" height="3" fill="#505050"/><rect x="561.36" y="320.300" width="1" height="3" fill="#505050"/><rect x="568.69" y="320.300" width="1" height="3" fill="#505050"/><rect x="576.02" y="320.300" width="1" height="3" fill="#505050"/><rect x="583.35" y="317" width="1" height="6.300" fill="#5c5c5c"/><rect x="590.68" y="320.300" width="1" height="3" fill="#505050"/><rect x="598.01" y="320.300" width="1" height="3" fill="#505050"/><rect x="605.34" y="320.300" width="1" height="3" fill="#505050"/><rect x="612.67" y="320.300" width="1" height="3" fill="#505050"/><rect x="620.00" y="317" width="1" height="6.300" fill="#5c5c5c"/><rect x="627.33" y="320.300" width="1" height="3" fill="#505050"/><rect x="634.66" y="320.300" width="1" height="3" fill="#505050"/><rect x="641.99" y="320.300" width="1" height="3" fill="#505050"/><rect x="649.32" y="320.300" width="1" height="3" fill="#505050"/><rect x="656.65" y="317" width="1" height="6.300" fill="#5c5c5c"/><rect x="663.98" y="320.300" width="1" height="3" fill="#505050"/><rect x="671.31" y="320.300" width="1" height="3" fill="#505050"/><rect x="678.64" y="320.300" width="1" height="3" fill="#505050"/><rect x="685.97" y="320.300" width="1" height="3" fill="#505050"/><rect x="693.30" y="317" width="1" height="6.300" fill="#5c5c5c"/><rect x="700.63" y="320.300" width="1" height="3" fill="#505050"/><rect x="707.96" y="320.300" width="1" height="3" fill="#505050"/><rect x="715.29" y="320.300" width="1" height="3" fill="#505050"/><rect x="722.62" y="320.300" width="1" height="3" fill="#505050"/><rect x="729.95" y="317" width="1" height="6.300" fill="#5c5c5c"/><rect x="737.28" y="320.300" width="1" height="3" fill="#505050"/><rect x="744.61" y="320.300" width="1" height="3" fill="#505050"/><rect x="751.94" y="320.300" width="1" height="3" fill="#505050"/><rect x="759.27" y="320.300" width="1" height="3" fill="#505050"/><rect x="766.60" y="317" width="1" height="6.300" fill="#5c5c5c"/><rect x="773.93" y="320.300" width="1" height="3" fill="#505050"/><rect x="781.26" y="320.300" width="1" height="3" fill="#505050"/></svg>
<div class="t" style="left:72.00px;top:302.69px;font-size:8.2px;color:#9c9c9c;transform:scaleX(0.8772);transform-origin:0 50%;">00:00:00:00</div>
<div class="t" style="left:218.60px;top:302.69px;font-size:8.2px;color:#9c9c9c;transform:scaleX(0.8772);transform-origin:0 50%;">00:00:00:20</div>
<div class="t" style="left:365.20px;top:302.69px;font-size:8.2px;color:#9c9c9c;transform:scaleX(0.8772);transform-origin:0 50%;">00:00:01:16</div>
<div class="t" style="left:511.80px;top:302.69px;font-size:8.2px;color:#9c9c9c;transform:scaleX(0.8772);transform-origin:0 50%;">00:00:02:12</div>
<div class="t" style="left:658.40px;top:302.69px;font-size:8.2px;color:#9c9c9c;transform:scaleX(0.8772);transform-origin:0 50%;">00:00:03:08</div>
<div class="a" style="left:70.3px;top:294px;width:1px;height:166px;background:#303030;"></div>
<div class="a" style="left:0px;top:370.3px;width:800px;height:0.8px;background:#1e1e1e;"></div>
<div class="a" style="left:0px;top:371px;width:71px;height:0.8px;background:#303030;"></div>
<div class="a" style="left:0px;top:417px;width:71px;height:1px;background:#333333;"></div>
<div class="a" style="left:70.7px;top:371px;width:715.6px;height:46.3px;background:#fbfaf4;"></div>
<div class="a" style="left:79px;top:372.75px;width:707.3px;height:43.25px;background:#b09652;"></div>
<svg class="a" style="left:72.8px;top:390px;" width="3.5" height="6.5" viewBox="0 0 3.5 6.5" fill="none"><path d="M0.700 0v6.500M2.800 0v6.500" stroke="#333" stroke-width="0.900"/></svg>
<div class="a" style="left:79.200px;top:374.700px;width:63.800px;height:38.400px;overflow:hidden;background:#14326a"><svg class="a" style="left:0;top:0" width="63.800" height="38.600" viewBox="0 0 63.800 38.600"><path d="M31.800 6.800L47.900 12.400 36 14.100 31.800 12.500z" fill="#3db6da"/><path d="M28.300 32L11.800 25.400 24 23.600 28.300 26z" fill="#3db6da"/><path d="M11.800 17.600L47.900 12.400V20.700L11.800 25.400z" fill="#2877c8"/><path d="M33.500 24.200l8-1" stroke="#d04a68" stroke-width="0.500"/><g fill="#b8c0d8"><rect x="3" y="28.500" width="2.500" height="0.600"/><rect x="56" y="19.500" width="2.500" height="0.600"/><rect x="45" y="33" width="3" height="0.600"/><rect x="59" y="33" width="2" height="0.600"/></g><rect x="56.500" y="5.500" width="2" height="0.600" fill="#d04a68"/></svg></div>
<div class="t" style="left:92.80px;top:392.35px;font-size:2px;color:#a8c4e8;transform:rotate(-7deg) scaleX(0.7282);transform-origin:0 50%;">PUT YOUR TEXT HERE</div>
<div class="t" style="left:93.00px;top:393.88px;font-size:4.2px;color:#ffffff;font-weight:bold;transform:rotate(-7deg) scaleX(0.8597);transform-origin:0 50%;">YOUR TITLE HERE</div>
<svg class="a" style="left:153.5px;top:381.3px;" width="8.5" height="8.5" viewBox="0 0 8.5 8.5" fill="none"><rect x="0" y="0" width="8.500" height="8.500" rx="1.200" fill="#f4f4f4"/><path d="M1.800 2.900h2.800M3.200 2.900v3.300M6 2.700v3.500" stroke="#b09652" stroke-width="0.900"/></svg>
<div class="t" style="left:165.60px;top:381.01px;font-size:9.2px;color:#ffffff;transform:scaleX(0.8280);transform-origin:0 50%;">Opener 12</div>
<div class="a" style="left:70.7px;top:417.3px;width:715.6px;height:35.9px;background:#545c94;"></div>
<div class="a" style="left:79.500px;top:427.500px;width:59.500px;height:25.500px;overflow:hidden;background:#2b1552;border-radius:3px 3px 0 0"></div>
<div class="t" style="left:93.70px;top:433.82px;font-size:13px;color:#e6a422;transform:scaleX(0.9030);transform-origin:0 50%;">TEXT</div>
<div class="t" style="left:93.70px;top:438.72px;font-size:13px;color:#8a5a20;transform:scaleX(0.9030);transform-origin:0 50%;transform:scale(0.9780,-0.4);transform-origin:0 50%;opacity:.8;">TEXT</div>
<svg class="a" style="left:153.5px;top:428px;" width="8.5" height="9" viewBox="0 0 8.5 9" fill="none"><path d="M1 0h6.500a1 1 0 0 1 1 1v4.800a1 1 0 0 1-1 1H4.500L2.300 8.800V6.800H1a1 1 0 0 1-1-1V1a1 1 0 0 1 1-1z" fill="#f4f4f4"/><path d="M2.800 2.500v1.600M4.500 2.500v1.600" stroke="#545c94" stroke-width="0.800"/></svg>
<div class="t" style="left:165.60px;top:427.61px;font-size:9.2px;color:#ffffff;transform:scaleX(0.8351);transform-origin:0 50%;">Text 8</div>
<div class="t" style="left:16.50px;top:386.11px;font-size:8.5px;color:#b4b4b4;transform:scaleX(0.8992);transform-origin:0 50%;">08</div>
<div class="t" style="left:16.50px;top:433.11px;font-size:8.5px;color:#b4b4b4;transform:scaleX(0.8992);transform-origin:0 50%;">07</div>
<svg class="a" style="left:16.2px;top:400.7px;" width="10.5" height="6.4" viewBox="0 0 10.5 6.4" fill="none"><g transform="scale(0.86)"><path d="M0.300 3.200C1.800 1 3.400 0.300 5.250 0.300S8.700 1 10.200 3.200C8.700 5.400 7.100 6.100 5.250 6.100S1.800 5.400 0.300 3.200z" fill="#f0f0f0"/><circle cx="5.250" cy="3.200" r="1.700" fill="#282828"/><circle cx="5.250" cy="3.200" r="0.700" fill="#f0f0f0"/></g></svg>
<svg class="a" style="left:34.8px;top:399.0px;" width="7" height="9" viewBox="0 0 7 9" fill="none"><rect x="0" y="3.800" width="6.400" height="5" rx="0.800" fill="#f0f0f0"/><path d="M1.600 3.800V2.200a1.700 1.700 0 0 1 3.400 0" stroke="#f0f0f0" stroke-width="1"/><circle cx="3.200" cy="6.200" r="0.800" fill="#282828"/></svg>
<svg class="a" style="left:16.2px;top:446.7px;" width="10.5" height="6.4" viewBox="0 0 10.5 6.4" fill="none"><g transform="scale(0.86)"><path d="M0.300 3.200C1.800 1 3.400 0.300 5.250 0.300S8.700 1 10.200 3.200C8.700 5.400 7.100 6.100 5.250 6.100S1.800 5.400 0.300 3.200z" fill="#f0f0f0"/><circle cx="5.250" cy="3.200" r="1.700" fill="#282828"/><circle cx="5.250" cy="3.200" r="0.700" fill="#f0f0f0"/></g></svg>
<svg class="a" style="left:34.8px;top:445.0px;" width="7" height="9" viewBox="0 0 7 9" fill="none"><rect x="0" y="3.800" width="6.400" height="5" rx="0.800" fill="#f0f0f0"/><path d="M1.600 3.800V2.200a1.700 1.700 0 0 1 3.400 0" stroke="#f0f0f0" stroke-width="1"/><circle cx="3.200" cy="6.200" r="0.800" fill="#282828"/></svg>
<div class="a" style="left:77.1px;top:297px;width:1.8px;height:161px;background:#e8a822;"></div>
<svg class="a" style="left:73.7px;top:295px;" width="8.8" height="6.5" viewBox="0 0 8.8 6.5" fill="none"><path d="M0 0h8.800v2.200L4.400 6.300 0 2.200z" fill="#f0aa22"/></svg>
<div class="a" style="left:792.3px;top:325px;width:3.4px;height:34.5px;background:#3e3e3e;border-radius:2px"></div>
<div class="a" style="left:70.7px;top:453px;width:730px;height:6px;background:#2b2b2b;"></div>
<div class="a" style="left:70.7px;top:453.5px;width:463.5px;height:5px;background:#404040;border-radius:2px"></div>
<div class="a" style="left:0px;top:0px;width:800px;height:460px;border:1px solid #63588a;border-top-color:#5f5787;border-bottom-width:1.400px;border-right-width:1.500px;pointer-events:none"></div>
</div>
</body></html>
